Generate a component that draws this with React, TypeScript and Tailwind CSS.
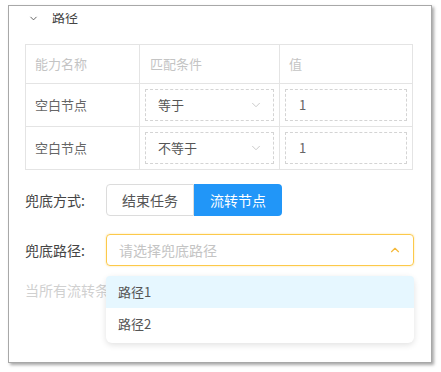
import React from 'react';
import { ChevronDown, ChevronUp } from 'lucide-react';

const font = { fontFamily: '"Noto Sans CJK SC", "Noto Sans", sans-serif' };

interface Row {
  name: string;
  cond: string;
  value: string;
}

const rows: Row[] = [
  { name: '空白节点', cond: '等于', value: '1' },
  { name: '空白节点', cond: '不等于', value: '1' },
];

const ConditionRow: React.FC<{ row: Row }> = ({ row }) => (
  <div className="flex h-[43px] border-t border-[#e4e4e4]">
    <div className="w-[113px] flex items-center pl-[9px] text-[13px] text-[#666]">
      {row.name}
    </div>
    <div className="w-[140px] border-l border-[#e4e4e4] pl-[5px] pr-[5px] pt-[5px]">
      <div className="h-[32px] border border-dashed border-[#d4d4d4] flex items-center justify-between pl-[12px] pr-[10px] text-[13px] text-[#555]">
        <span>{row.cond}</span>
        <ChevronDown className="w-[14px] h-[14px] text-[#c4c4c4]" strokeWidth={1.5} />
      </div>
    </div>
    <div className="flex-1 border-l border-[#e4e4e4] pl-[5px] pr-[5px] pt-[5px]">
      <div className="h-[32px] border border-dashed border-[#d4d4d4] flex items-center pl-[13px] text-[13px] text-[#666]">
        {row.value}
      </div>
    </div>
  </div>
);

export default function App() {
  return (
    <div className="w-[441px] h-[372px] bg-white pt-[5px] pl-[8px]" style={font}>
      <div className="w-[424px] h-[358px] bg-white border border-[#a8a8a8] shadow-[2px_2px_3px_rgba(0,0,0,0.35)] pt-[7px]">
        <div className="relative h-[348px] overflow-hidden px-[16px]">
          <div className="flex items-center h-[10px] -mt-[0px] ml-[3px] gap-[13px] text-[13px] text-[#444]">
            <ChevronDown className="w-[11px] h-[11px] text-[#555]" strokeWidth={2} />
            <span className="leading-[10px] -mt-[2px]">路径</span>
          </div>

          <div className="mt-[21px] w-[388px] border border-[#e4e4e4]">
            <div className="flex h-[38px] text-[13px] text-[#c4c4c4]">
              <div className="w-[113px] flex items-center pl-[9px]">能力名称</div>
              <div className="w-[140px] flex items-center pl-[10px] border-l border-[#e4e4e4]">匹配条件</div>
              <div className="flex-1 flex items-center pl-[9px] border-l border-[#e4e4e4]">值</div>
            </div>
            {rows.map((r, i) => (
              <ConditionRow key={i} row={r} />
            ))}
          </div>

          <div className="flex items-center mt-[14px] h-[32px]">
            <div className="w-[81px] text-[14px] text-[#444]">兜底方式:</div>
            <div className="flex h-[32px] text-[14px]">
              <div className="w-[88px] flex items-center justify-center border border-[#dcdcdc] rounded-l-[4px] text-[#555]">
                结束任务
              </div>
              <div className="w-[88px] flex items-center justify-center bg-[#2196f8] rounded-r-[4px] text-white">
                流转节点
              </div>
            </div>
          </div>

          <div className="flex items-center mt-[18px] h-[32px]">
            <div className="w-[81px] text-[14px] text-[#444]">兜底路径:</div>
            <div className="w-[308px] h-[32px] border border-[#fcc94a] rounded-[4px] shadow-[0_0_2px_rgba(252,201,74,0.6)] flex items-center justify-between pl-[12px] pr-[11px] text-[14px] text-[#c4c4c4]">
              <span>请选择兜底路径</span>
              <ChevronUp className="w-[14px] h-[14px] text-[#f5b93a]" strokeWidth={2} />
            </div>
          </div>

          <div className="mt-[14px] text-[14px] text-[#d0d0d0]">当所有流转条件都不满足时，走兜底路径</div>

          <div className="absolute left-[97px] top-[263px] w-[308px] bg-white rounded-[6px] shadow-[0_2px_6px_rgba(0,0,0,0.12)] pb-[3px] text-[13px] text-[#555]">
            <div className="h-[32px] flex items-center pl-[12px] bg-[#e6f7ff] rounded-t-[4px]">路径1</div>
            <div className="h-[32px] flex items-center pl-[12px]">路径2</div>
          </div>
        </div>
      </div>
    </div>
  );
}
